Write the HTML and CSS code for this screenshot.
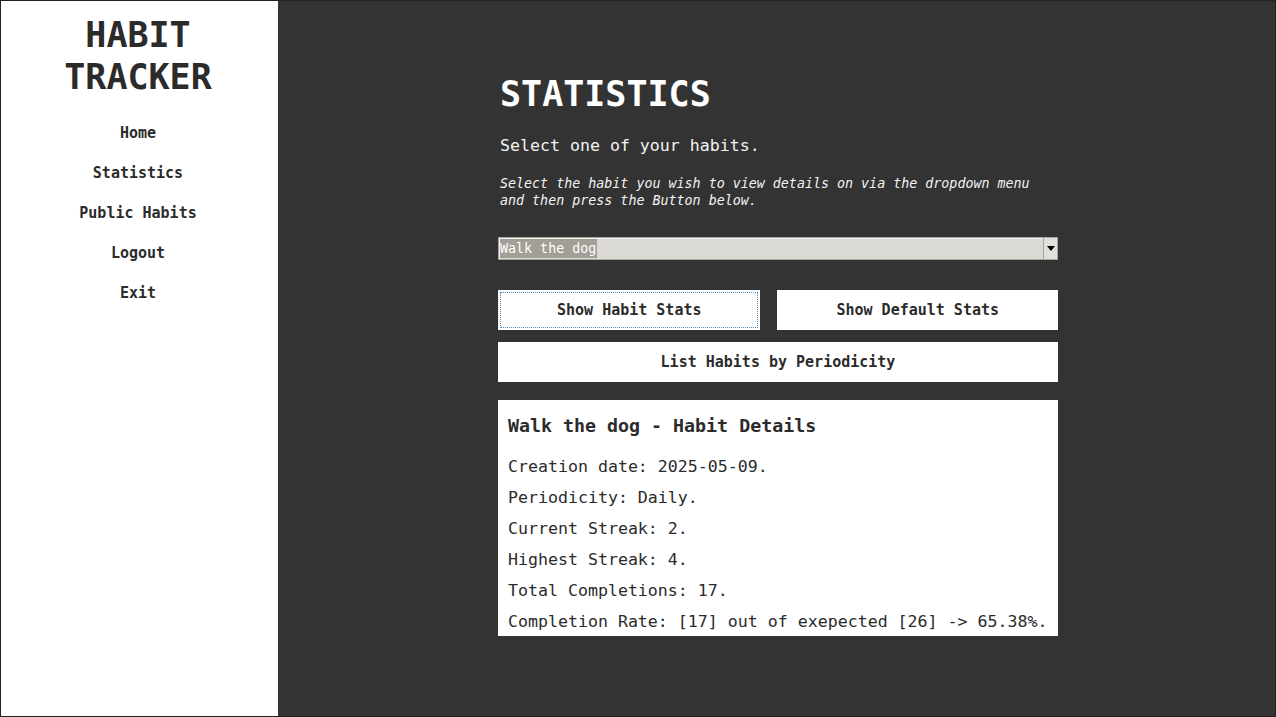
FILE: index.html
```html
<!DOCTYPE html>
<html lang="en">
<head>
<meta charset="utf-8">
<title>Habit Tracker - Statistics</title>
<link rel="stylesheet" href="styles.css">
</head>
<body>
<div class="app">
  <aside class="sidebar">
    <h1 class="brand">HABIT<br>TRACKER</h1>
    <nav class="nav">
      <a class="nav-link" href="#">Home</a>
      <a class="nav-link" href="#">Statistics</a>
      <a class="nav-link" href="#">Public Habits</a>
      <a class="nav-link" href="#">Logout</a>
      <a class="nav-link" href="#">Exit</a>
    </nav>
  </aside>
  <main class="main">
    <div class="content">
      <h2 class="page-title">STATISTICS</h2>
      <p class="lead">Select one of your habits.</p>
      <p class="hint">Select the habit you wish to view details on via the dropdown menu and then press the Button below.</p>
      <div class="select">
        <span class="select-value"><span class="select-highlight">Walk the dog</span></span>
        <span class="select-arrow"><span class="triangle"></span></span>
      </div>
      <div class="btn-row">
        <button class="btn btn-focus">Show Habit Stats</button>
        <button class="btn">Show Default Stats</button>
      </div>
      <button class="btn btn-wide">List Habits by Periodicity</button>
      <section class="details">
        <h3 class="details-title">Walk the dog - Habit Details</h3>
        <p class="details-line">Creation date: 2025-05-09.</p>
        <p class="details-line">Periodicity: Daily.</p>
        <p class="details-line">Current Streak: 2.</p>
        <p class="details-line">Highest Streak: 4.</p>
        <p class="details-line">Total Completions: 17.</p>
        <p class="details-line">Completion Rate: [17] out of exepected [26] -&gt; 65.38%.</p>
      </section>
    </div>
  </main>
</div>
</body>
</html>
```
FILE: styles.css
```css
* { box-sizing: border-box; }
html, body { margin: 0; padding: 0; }
body {
  font-family: "DejaVu Sans Mono", monospace;
  background: #333333;
}
.app {
  display: flex;
  width: 1276px;
  height: 717px;
  border: 1px solid #222222;
  background: #333333;
}
.sidebar {
  width: 277px;
  flex: 0 0 277px;
  background: #ffffff;
  padding: 13px 3px 0 0;
  text-align: center;
  color: #2b2b2b;
}
.brand {
  margin: 0;
  font-size: 35px;
  line-height: 42px;
  font-weight: bold;
  color: #2b2b2b;
}
.nav {
  display: flex;
  flex-direction: column;
  align-items: center;
  margin-top: 15px;
}
.nav-link {
  display: block;
  font-size: 15px;
  line-height: 40px;
  font-weight: bold;
  color: #2b2b2b;
  text-decoration: none;
}
.main {
  flex: 1 1 auto;
  display: flex;
  justify-content: center;
  padding: 72px 0 0 3px;
}
.content {
  width: 560px;
  color: #f2f2f2;
}
.page-title {
  margin: 0;
  padding: 0 2px;
  font-size: 35px;
  line-height: 42px;
  font-weight: bold;
  color: #ffffff;
}
.lead {
  margin: 21px 0 0;
  padding: 0 2px;
  font-size: 16.6px;
  line-height: 20px;
}
.hint {
  margin: 20px 0 0;
  padding: 0 2px;
  font-size: 13.33px;
  line-height: 16.7px;
  font-style: italic;
}
.select {
  display: flex;
  height: 23px;
  margin-top: 27.5px;
  background: #dcdad5;
  border: 1px solid #a7a49d;
  box-shadow: inset 1px 1px 0 #f4f3f1;
}
.select-value {
  flex: 1 1 auto;
  display: flex;
  align-items: center;
  padding-left: 1px;
}
.select-highlight {
  background: #a39e96;
  color: #ffffff;
  font-size: 13.33px;
  line-height: 19px;
  padding-right: 1px;
}
.select-arrow {
  flex: 0 0 14px;
  display: flex;
  align-items: center;
  justify-content: center;
  border-left: 1px solid #a7a49d;
  background: #e2e0dc;
}
.triangle {
  width: 0;
  height: 0;
  border-left: 4px solid transparent;
  border-right: 4px solid transparent;
  border-top: 5px solid #000000;
}
.btn-row {
  display: flex;
  gap: 17px;
  margin-top: 30px;
}
.btn {
  display: block;
  height: 40px;
  border: none;
  background: #ffffff;
  color: #2b2b2b;
  font-family: "DejaVu Sans Mono", monospace;
  font-size: 15px;
  font-weight: bold;
  padding: 0 10px;
  cursor: pointer;
}
.btn-row .btn { flex: 1 1 auto; }
.btn-focus {
  outline: 1px dotted #4a87bd;
  outline-offset: -3px;
}
.btn-wide {
  width: 100%;
  margin-top: 12px;
}
.details {
  margin-top: 18px;
  height: 236px;
  overflow: hidden;
  background: #ffffff;
  color: #2b2b2b;
  padding: 14.3px 0 0 10px;
}
.details-title {
  margin: 0 0 13px;
  font-size: 18.3px;
  line-height: 24px;
  font-weight: bold;
}
.details-line {
  margin: 0;
  font-size: 16.6px;
  line-height: 31px;
  white-space: nowrap;
}
```
